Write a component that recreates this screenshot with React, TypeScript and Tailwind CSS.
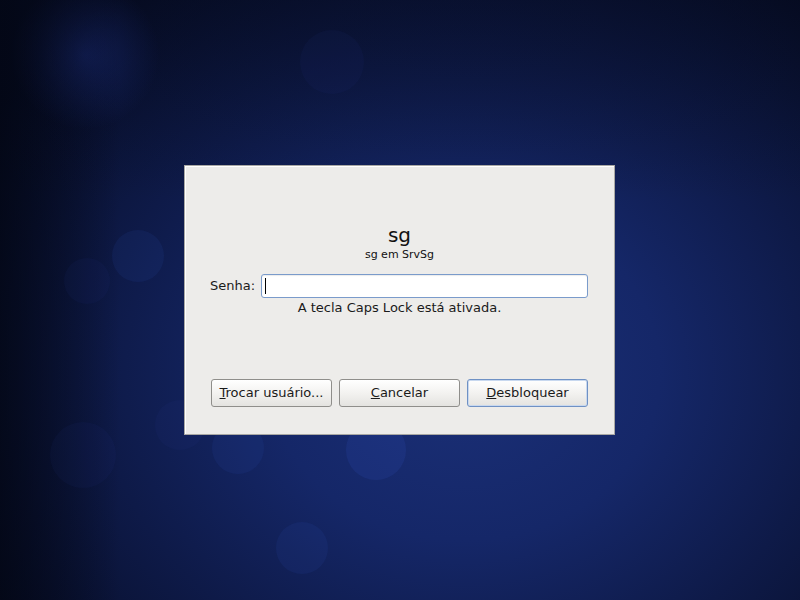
import React from 'react';

// GNOME screensaver unlock dialog over a dark blue bokeh desktop

const bokeh = [
  { l: 112, t: 230, s: 52, o: 'opacity-10' },
  { l: 64, t: 258, s: 46, o: 'opacity-5' },
  { l: 50, t: 422, s: 66, o: 'opacity-5' },
  { l: 212, t: 422, s: 52, o: 'opacity-10' },
  { l: 346, t: 420, s: 60, o: 'opacity-15' },
  { l: 276, t: 522, s: 52, o: 'opacity-10' },
  { l: 155, t: 400, s: 50, o: 'opacity-5' },
  { l: 300, t: 30, s: 64, o: 'opacity-5' },
];

const Btn = ({ u, rest, primary = false }: { u: string; rest: string; primary?: boolean }) => (
  <button
    className={`w-[121px] h-[28px] rounded-[3px] border text-[13px] text-[#1a1a1a] bg-[linear-gradient(#ffffff,#f3f2f0_50%,#e4e3e0)] ${
      primary ? 'border-[#6f91c4] shadow-[inset_0_0_0_1px_#c8d8ef]' : 'border-[#8f8e8b]'
    }`}
  >
    <u>{u}</u>
    {rest}
  </button>
);

export default function App() {
  return (
    <div
      className="relative w-[800px] h-[600px] overflow-hidden pt-[165px] pl-[184px] bg-[radial-gradient(ellipse_70%_80%_at_58%_62%,#1b3078_0%,#152768_35%,#0e1a48_65%,#060c24_100%)]"
      style={{ fontFamily: '"DejaVu Sans", Verdana, sans-serif' }}
    >
      {/* soft glow top-left */}
      <div className="absolute left-[10px] top-[-20px] w-[150px] h-[150px] rounded-full bg-[radial-gradient(circle,#16266a_0%,rgba(22,38,106,0)_70%)]" />
      {/* darker left edge and top */}
      <div className="absolute inset-y-0 left-0 w-[120px] bg-[linear-gradient(90deg,rgba(2,5,16,0.7),rgba(2,5,16,0))]" />
      <div className="absolute inset-x-0 top-0 h-[200px] bg-[linear-gradient(180deg,rgba(4,8,24,0.35),rgba(4,8,24,0))]" />
      {bokeh.map((b, i) => (
        <div
          key={i}
          className={`absolute rounded-full bg-[#3558c8] ${b.o}`}
          style={{ left: b.l, top: b.t, width: b.s, height: b.s }}
        />
      ))}

      <div className="relative w-[431px] h-[270px] bg-[#edecea] border border-[#a9a8a4] shadow-[inset_1px_1px_0_#ffffff] flex flex-col items-center">
        <div className="mt-[56px] text-[20px] leading-[26px] text-[#111]">sg</div>
        <div className="text-[11px] leading-[14px] text-[#111]">sg em SrvSg</div>

        <div className="mt-[12px] flex items-center w-full pl-[25px]">
          <span className="text-[13px] text-[#1a1a1a] mr-[6px]">Senha:</span>
          <div className="w-[327px] h-[24px] rounded-[3px] border border-[#7a9bcb] bg-white flex items-center pl-[3px] shadow-[inset_0_1px_1px_rgba(0,0,0,0.08)]">
            <div className="w-px h-[16px] bg-black" />
          </div>
        </div>
        <div className="mt-[1px] text-[13px] leading-[18px] text-[#1a1a1a]">A tecla Caps Lock está ativada.</div>

        <div className="mt-auto mb-[27px] flex gap-[7px]">
          <Btn u="T" rest="rocar usuário..." />
          <Btn u="C" rest="ancelar" />
          <Btn u="D" rest="esbloquear" primary />
        </div>
      </div>
    </div>
  );
}
